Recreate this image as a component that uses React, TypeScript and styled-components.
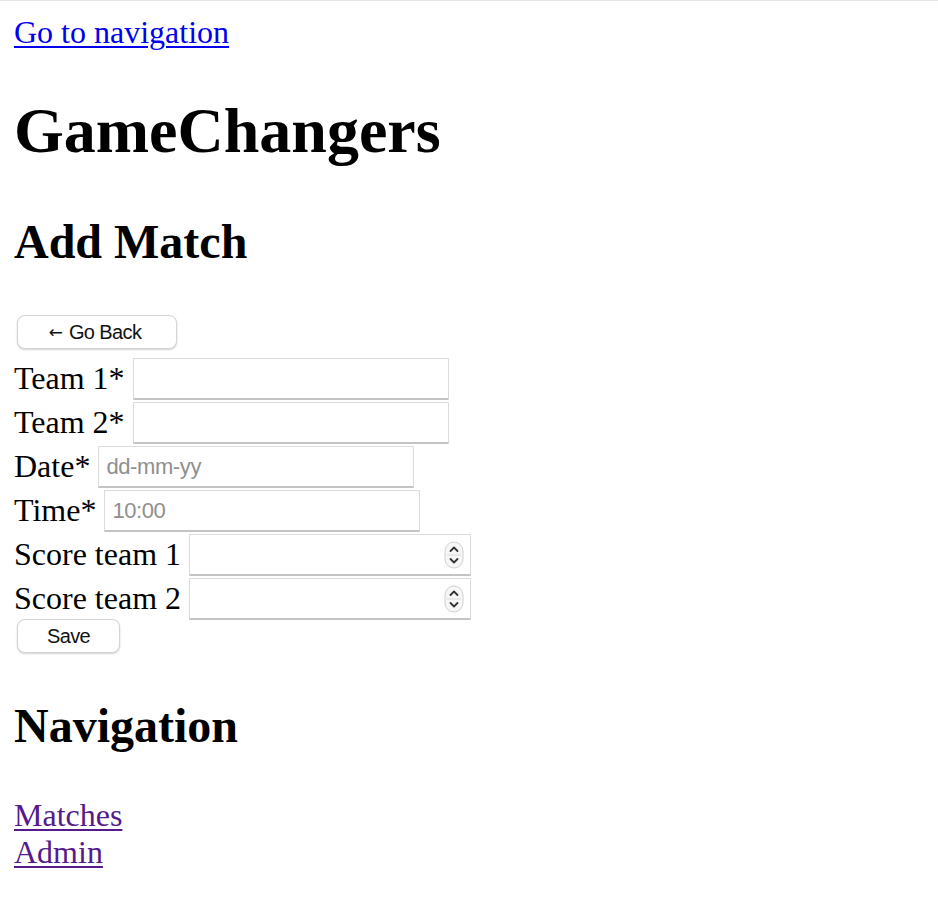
import React from "react";
import styled, { createGlobalStyle } from "styled-components";

const Global = createGlobalStyle`
  html, body { margin: 0; padding: 0; background: #ffffff; }
  body { font-family: "Liberation Serif", "Times New Roman", serif; font-size: 32px; color: #000; }
`;

const Page = styled.div`
  border-top: 1px solid #e6e6e6;
  padding: 13px 14px 20px 14px;
`;

const TextLink = styled.a<{ $visited?: boolean }>`
  display: block;
  width: max-content;
  line-height: 37px;
  color: ${(p) => (p.$visited ? "#551a8b" : "#0000ee")};
  text-decoration: underline;
  text-decoration-thickness: 2px;
  text-underline-offset: 3px;
`;

const Title = styled.h1`
  margin: 43px 0 0 0;
  font-size: 64px;
  line-height: 74px;
  font-weight: bold;
`;

const SectionTitle = styled.h2<{ $top: number }>`
  margin: ${(p) => p.$top}px 0 0 0;
  font-size: 48px;
  line-height: 55px;
  font-weight: bold;
`;

const Form = styled.form`
  display: flex;
  flex-direction: column;
  align-items: flex-start;
  margin-top: 46px;
`;

const Button = styled.button<{ $w: number }>`
  box-sizing: border-box;
  width: ${(p) => p.$w}px;
  height: 34px;
  margin-left: 3px;
  padding: 0;
  background: #ffffff;
  border: 1px solid #d4d4d4;
  border-radius: 8px;
  box-shadow: 0 1px 2px rgba(0, 0, 0, 0.18);
  font-family: "Liberation Sans", Arial, "DejaVu Sans", sans-serif;
  font-size: 20px;
  letter-spacing: -0.6px;
  color: #111;
  display: flex;
  align-items: center;
  justify-content: center;
  gap: 6px;
`;

const Arrow = styled.span`
  font-family: "DejaVu Sans", sans-serif;
  font-size: 17px;
  letter-spacing: 0;
  margin-left: -4px;
`;

const Fields = styled.div`
  display: flex;
  flex-direction: column;
  gap: 2px;
  margin: 8px 0 0 0;
`;

const Row = styled.div`
  display: flex;
  align-items: center;
  gap: 8px;
  height: 42px;
`;

const Label = styled.label`
  line-height: 42px;
  white-space: nowrap;
`;

const FieldBox = styled.div<{ $w: number }>`
  position: relative;
  width: ${(p) => p.$w}px;
  height: 42px;
`;

const Input = styled.input`
  box-sizing: border-box;
  width: 100%;
  height: 42px;
  margin: 0;
  padding: 2px 7px 0 7px;
  border: 1px solid #dcdcdc;
  border-bottom: 2px solid #c4c4c4;
  border-radius: 1px;
  background: #ffffff;
  font-family: "Liberation Sans", Arial, sans-serif;
  font-size: 22px;
  letter-spacing: -0.4px;
  color: #111;
  outline: none;
  &::placeholder { color: #8f8f8f; }
`;

const Spinner = styled.svg`
  position: absolute;
  right: 7px;
  top: 8px;
`;

const NavList = styled.nav`
  margin-top: 44px;
`;

function SpinIcon() {
  return (
    <Spinner width="20" height="28" viewBox="0 0 20 28" aria-hidden="true">
      <rect x="1" y="1" width="18" height="26" rx="9" fill="#f6f6f6" stroke="#d0d0d0" strokeWidth="1" />
      <line x1="3" y1="14" x2="17" y2="14" stroke="#dadada" strokeWidth="1" />
      <path d="M6.5 10 L10 6.5 L13.5 10" fill="none" stroke="#333" strokeWidth="1.8" strokeLinecap="round" strokeLinejoin="round" />
      <path d="M6.5 18 L10 21.5 L13.5 18" fill="none" stroke="#333" strokeWidth="1.8" strokeLinecap="round" strokeLinejoin="round" />
    </Spinner>
  );
}

type Field = { label: string; w: number; placeholder?: string; spin?: boolean };

const fields: Field[] = [
  { label: "Team 1*", w: 316 },
  { label: "Team 2*", w: 316 },
  { label: "Date*", w: 316, placeholder: "dd-mm-yy" },
  { label: "Time*", w: 316, placeholder: "10:00" },
  { label: "Score team 1", w: 282, spin: true },
  { label: "Score team 2", w: 282, spin: true },
];

export default function App() {
  return (
    <>
      <Global />
      <Page>
        <TextLink href="#navigation">Go to navigation</TextLink>
        <Title>GameChangers</Title>
        <SectionTitle $top={46}>Add Match</SectionTitle>
        <Form onSubmit={(e) => e.preventDefault()}>
          <Button type="button" $w={160}>
            <Arrow>←</Arrow>
            <span>Go Back</span>
          </Button>
          <Fields>
            {fields.map((f, i) => (
              <Row key={f.label}>
                <Label htmlFor={`f${i}`}>{f.label}</Label>
                <FieldBox $w={f.w}>
                  <Input id={`f${i}`} placeholder={f.placeholder} />
                  {f.spin && <SpinIcon />}
                </FieldBox>
              </Row>
            ))}
          </Fields>
          <Button type="submit" $w={103}>Save</Button>
        </Form>
        <SectionTitle $top={45} id="navigation">Navigation</SectionTitle>
        <NavList>
          <TextLink href="#matches" $visited>Matches</TextLink>
          <TextLink href="#admin" $visited>Admin</TextLink>
        </NavList>
      </Page>
    </>
  );
}
